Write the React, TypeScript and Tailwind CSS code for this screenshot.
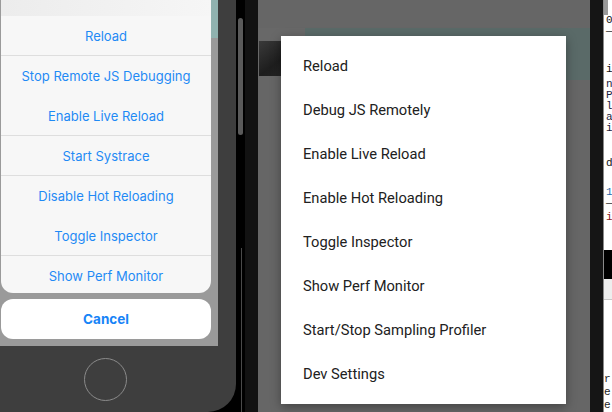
import React from 'react';

// iOS action sheet items; `line` draws the hairline under the row
const iosItems = [
  { label: 'Reload', line: true },
  { label: 'Stop Remote JS Debugging', line: false },
  { label: 'Enable Live Reload', line: true },
  { label: 'Start Systrace', line: true },
  { label: 'Disable Hot Reloading', line: false },
  { label: 'Toggle Inspector', line: true },
];

const androidItems = [
  'Reload',
  'Debug JS Remotely',
  'Enable Live Reload',
  'Enable Hot Reloading',
  'Toggle Inspector',
  'Show Perf Monitor',
  'Start/Stop Sampling Profiler',
  'Dev Settings',
];

function IosSimulator() {
  return (
    <div className="flex w-[236px] shrink-0 flex-col rounded-br-[28px] bg-[#3e3e3e]">
      <div className="flex h-[346px] w-[218px] bg-[#9a9a9a]">
        <div className="ml-[1px] flex w-[210px] flex-col pb-[7px]">
          <div className="flex flex-col overflow-hidden rounded-b-[12px] bg-[#f7f7f7]">
            <div className="h-[16px] bg-gradient-to-r from-[#ececec] to-[#f6f6f6]" />
            {iosItems.map((item) => (
              <div
                key={item.label}
                className={`flex h-10 items-center justify-center pt-[2px] text-[13px] text-[#1f8af5] ${item.line ? 'border-b border-[#dedede]' : ''}`}
              >
                {item.label}
              </div>
            ))}
            <div className="flex h-[37px] items-center justify-center pt-[5px] text-[13px] text-[#1f8af5]">
              Show Perf Monitor
            </div>
          </div>
          <div className="mt-[6px] flex h-10 items-center justify-center rounded-[12px] bg-white text-[13.5px] font-bold text-[#1784f7]">
            Cancel
          </div>
        </div>
        <div className="flex w-[7px] flex-col">
          <div className="h-[38px] bg-[#90b2af]" />
        </div>
      </div>
      <div className="flex flex-1 items-center pl-[84px]">
        <div className="h-[43px] w-[43px] rounded-full border-[1.5px] border-[#8a8a8a]" />
      </div>
    </div>
  );
}

function AndroidEmulator() {
  return (
    <div className="relative flex w-[332px] shrink-0 flex-col bg-[#666666]">
      <div className="h-[28px] bg-[#666666]" />
      <div className="flex h-[52px]">
        <div className="w-[47px] bg-[#686868] pl-[1px] pt-[13px]">
          <div className="h-[35px] w-[46px] bg-gradient-to-br from-[#3a3a3a] via-[#1e1e1e] to-[#2c2c2c]" />
        </div>
        <div className="flex-1 bg-[#5a6a68]" />
      </div>
      <div className="flex-1" />

      {/* dev menu dialog over the dimmed screen */}
      <div className="absolute left-[23px] top-[36px] flex h-[368px] w-[285px] flex-col bg-white py-2 shadow-[0_3px_10px_rgba(0,0,0,0.35)]">
        {androidItems.map((label) => (
          <div key={label} className="flex h-[44px] items-center pl-[22px] pt-[1px] font-['Roboto',sans-serif] text-[14.7px] text-[#212121]">
            {label}
          </div>
        ))}
      </div>
    </div>
  );
}

function TerminalSlice() {
  return (
    <div className="flex w-[8px] shrink-0 flex-col overflow-hidden bg-white font-['Liberation_Mono',monospace] text-[11px] leading-[11px]">
      <div className="h-[16px] w-[4px] bg-[#9a9a9a]" />
      <div className="pl-[2px] text-[#111]">0</div>
      <div className="pl-[2px] text-[#333]">—</div>
      <div className="mt-[27px] pl-[2px] text-[#111]">i</div>
      <div className="mt-[4px] flex flex-col pl-[2px] text-[#1c1c3a]">
        <span>n</span>
        <span>P</span>
        <span>l</span>
        <span>a</span>
        <span>i</span>
      </div>
      <div className="mt-[24px] pl-[2px] text-[#111]">d</div>
      <div className="mt-[18px] pl-[2px] text-[#2a6aa8]">1</div>
      <div className="pl-[2px] text-[#333]">—</div>
      <div className="mt-[3px] pl-[2px] text-[#8b2020]">i</div>
      <div className="mt-[27px] h-[30px] bg-black" />
      <div className="h-[22px] border-b border-[#c8c8c8] bg-[#eeeeee]" />
      <div className="mt-[73px] flex flex-col leading-[13px] text-[#222]">
        <span>r</span>
        <span>e</span>
        <span>e</span>
      </div>
    </div>
  );
}

export default function App() {
  return (
    <div className="flex h-[412px] w-[612px] overflow-hidden bg-black font-['Inter','Liberation_Sans',sans-serif]">
      <IosSimulator />
      {/* gap between the two device windows */}
      <div className="flex w-[9px] shrink-0 flex-col bg-black">
        <div className="ml-[2px] mt-[18px] h-[117px] w-[5px] rounded-sm bg-[#5a5a5a]" />
        <div className="ml-[5px] mt-[113px] h-[164px] w-[1px] bg-[#4a4a4a]" />
      </div>
      <div className="w-[13px] shrink-0 bg-[#121212]" />
      <AndroidEmulator />
      <div className="w-[13px] shrink-0 bg-[#151515]" />
      <div className="w-[1px] shrink-0 bg-[#8a8a8a]" />
      <TerminalSlice />
    </div>
  );
}
